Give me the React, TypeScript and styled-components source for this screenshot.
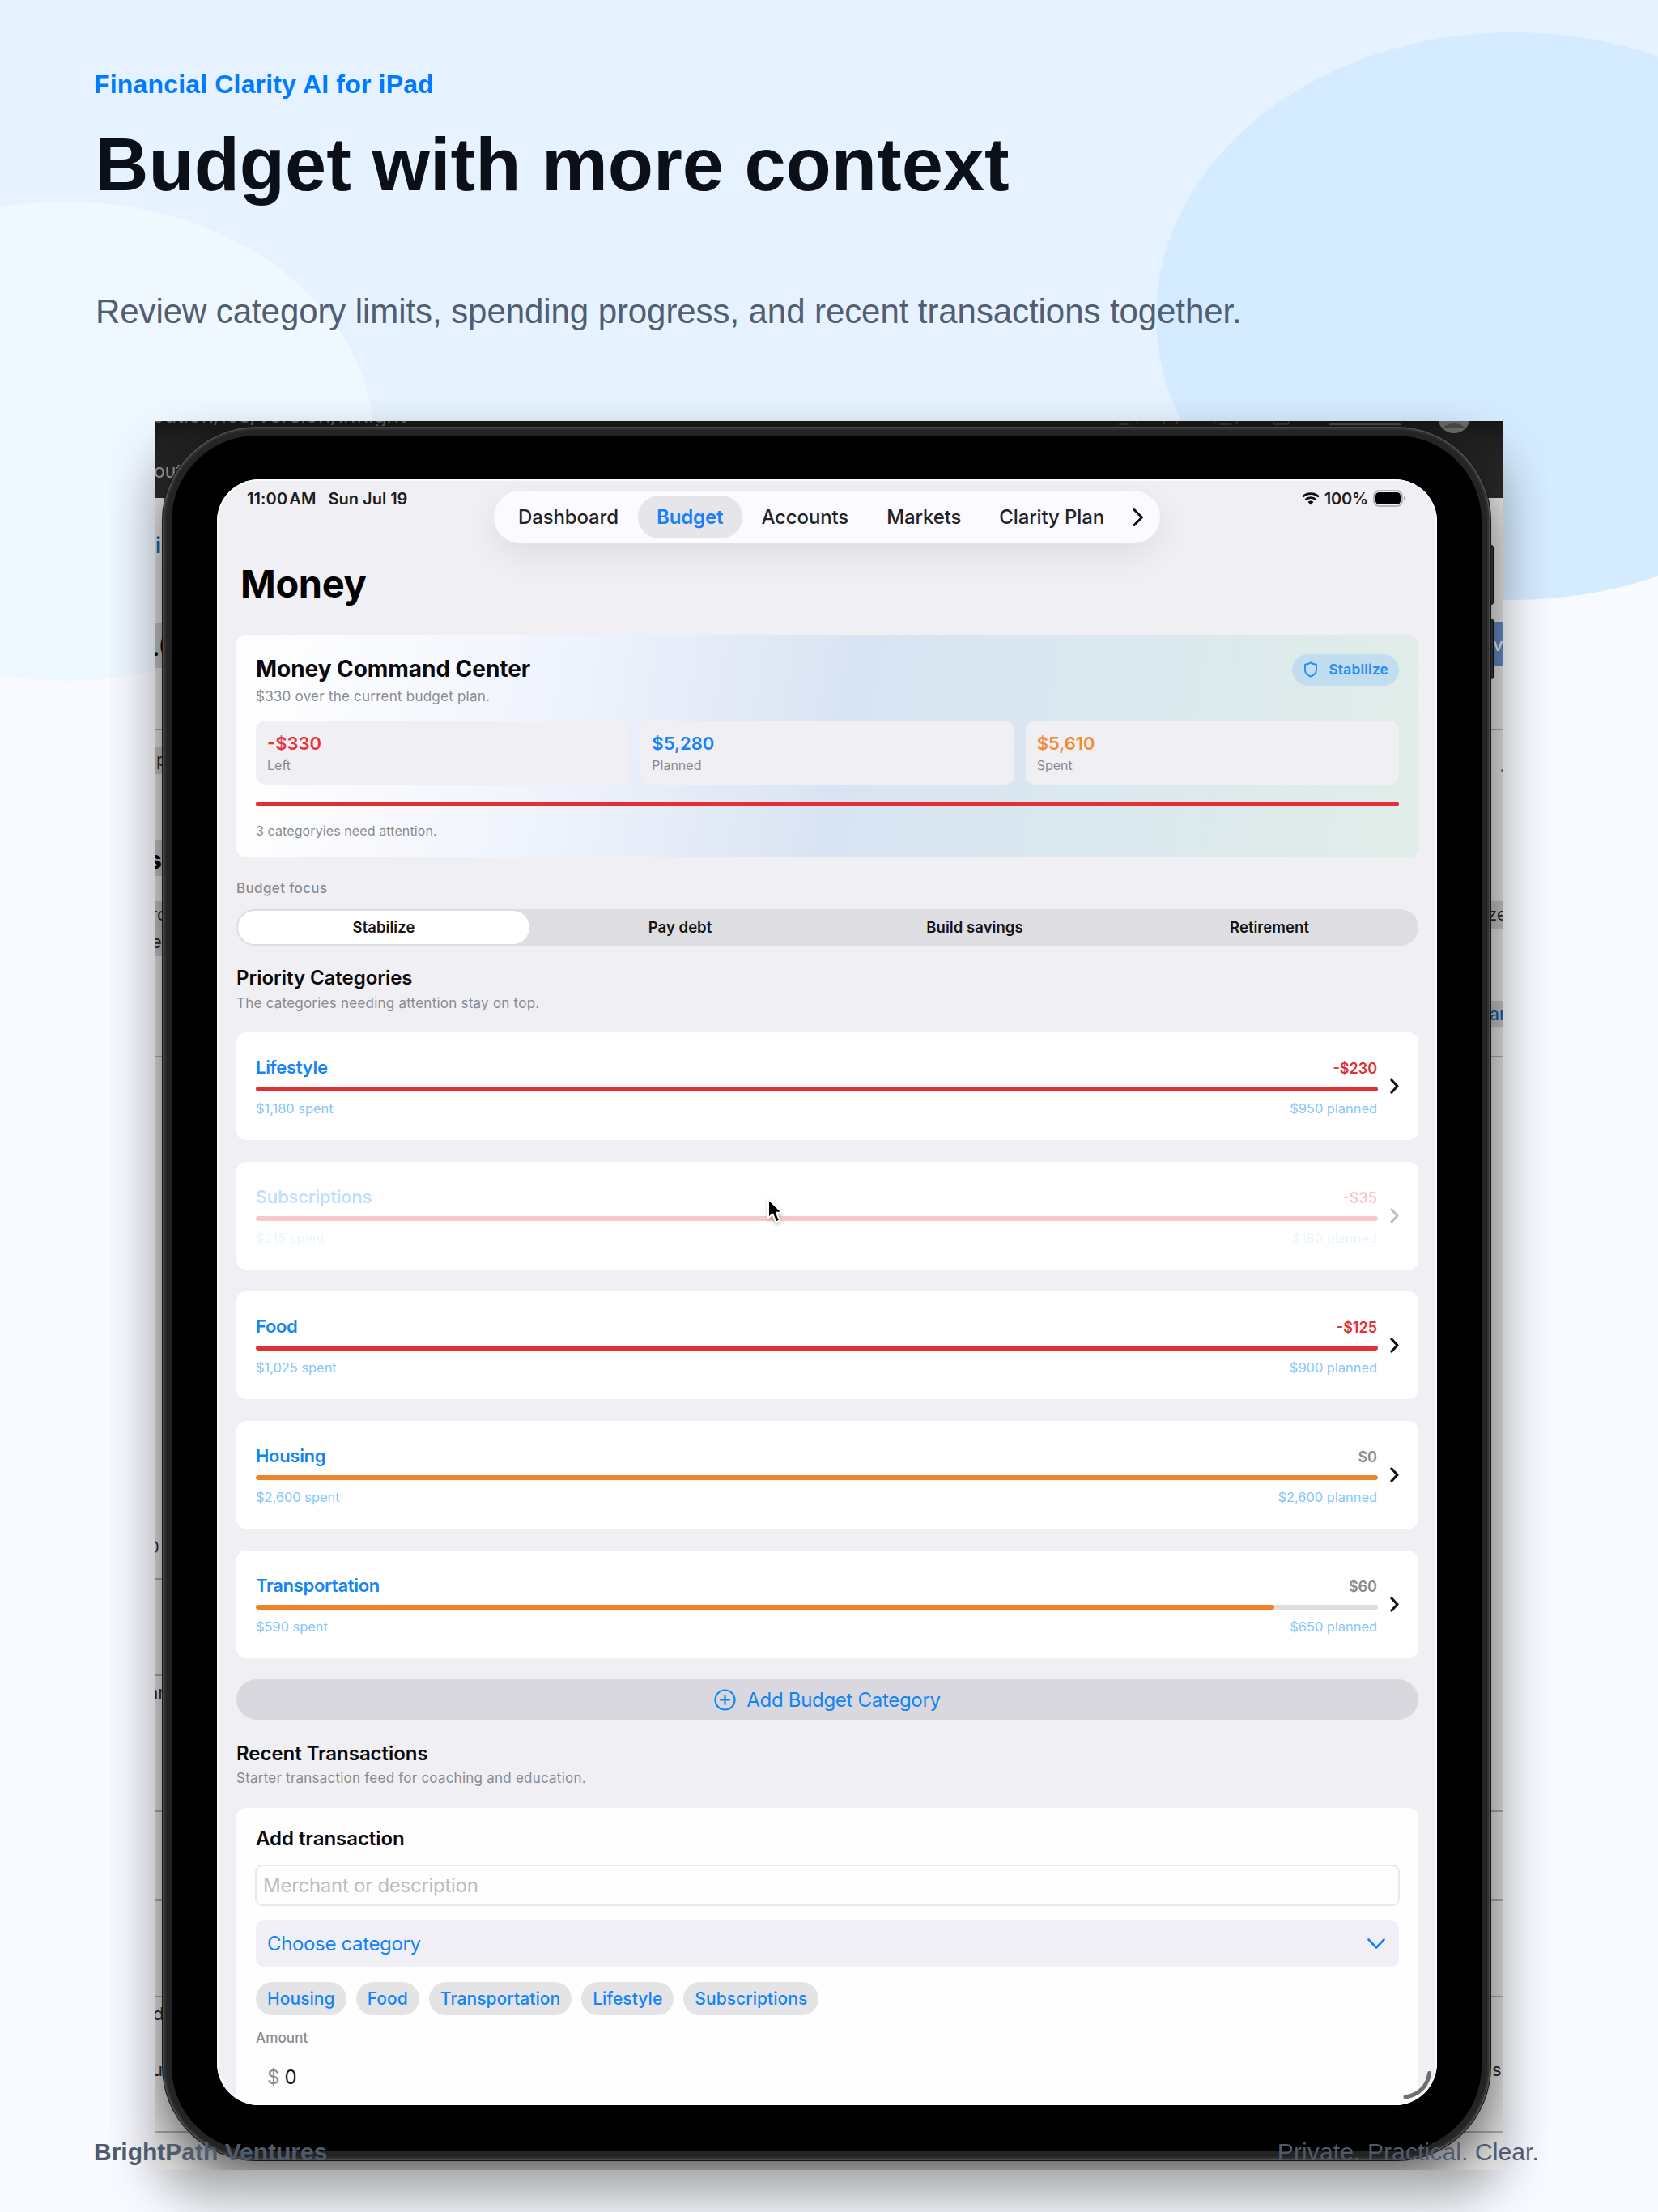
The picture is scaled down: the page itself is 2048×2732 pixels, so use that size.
import * as React from 'react';
import styled, { createGlobalStyle } from 'styled-components';

const BLUE = '#1484f4';
const RED = '#e22f34';
const ORANGE = '#ee8427';
const GREY = '#8a8a8f';

interface Category {
    name: string;
    left: string;
    spent: string;
    planned: string;
    progress: number;
    barColor: string;
    leftColor: string;
    faded?: boolean;
}

interface Fragment {
    x: number;
    y: number;
    text: string;
    size?: number;
    color?: string;
    weight?: number;
}

interface Band {
    y: number;
    height: number;
    color: string;
    right?: boolean;
}

const tabs = ['Dashboard', 'Budget', 'Accounts', 'Markets', 'Clarity Plan'];

const focusOptions = ['Stabilize', 'Pay debt', 'Build savings', 'Retirement'];

const tiles = [
    { value: '-$330', label: 'Left', color: '#e5353c' },
    { value: '$5,280', label: 'Planned', color: BLUE },
    { value: '$5,610', label: 'Spent', color: '#f08c38' },
];

const categories: Category[] = [
    { name: 'Lifestyle', left: '-$230', spent: '$1,180 spent', planned: '$950 planned', progress: 100, barColor: RED, leftColor: RED },
    { name: 'Subscriptions', left: '-$35', spent: '$215 spent', planned: '$180 planned', progress: 100, barColor: RED, leftColor: RED, faded: true },
    { name: 'Food', left: '-$125', spent: '$1,025 spent', planned: '$900 planned', progress: 100, barColor: RED, leftColor: RED },
    { name: 'Housing', left: '$0', spent: '$2,600 spent', planned: '$2,600 planned', progress: 100, barColor: ORANGE, leftColor: GREY },
    { name: 'Transportation', left: '$60', spent: '$590 spent', planned: '$650 planned', progress: 90.8, barColor: ORANGE, leftColor: GREY },
];

const chips = ['Housing', 'Food', 'Transportation', 'Lifestyle', 'Subscriptions'];

// pieces of the browser page that stick out behind the tablet
const bands: Band[] = [
    { y: 23, height: 1, color: '#3a3a3a' },
    { y: 249, height: 56, color: '#c4c4c4' },
    { y: 380, height: 2, color: '#aaaaaa' },
    { y: 402, height: 34, color: '#c4c4c4' },
    { y: 518, height: 44, color: '#c4c4c4' },
    { y: 593, height: 68, color: '#c4c4c4' },
    { y: 784, height: 2, color: '#aaaaaa' },
    { y: 1429, height: 2, color: '#aaaaaa' },
    { y: 1548, height: 2, color: '#aaaaaa' },
    { y: 1716, height: 2, color: '#aaaaaa' },
    { y: 1826, height: 2, color: '#aaaaaa' },
    { y: 1945, height: 2, color: '#aaaaaa' },
    { y: 2112, height: 2, color: '#aaaaaa' },
    { y: 248, height: 54, color: '#6488c0', right: true },
    { y: 380, height: 2, color: '#aaaaaa', right: true },
    { y: 593, height: 34, color: '#c4c4c4', right: true },
    { y: 716, height: 33, color: '#c4c4c4', right: true },
    { y: 784, height: 2, color: '#aaaaaa', right: true },
    { y: 1716, height: 2, color: '#aaaaaa', right: true },
    { y: 1826, height: 2, color: '#aaaaaa', right: true },
    { y: 1945, height: 2, color: '#aaaaaa', right: true },
    { y: 2112, height: 2, color: '#aaaaaa', right: true },
];

const fragments: Fragment[] = [
    { x: -4, y: -7, text: 'bution/ios/version/inflight', size: 26, color: '#5e5e5e' },
    { x: -1, y: 62, text: 'out', size: 23, color: '#9a9a9a' },
    { x: 1, y: 154, text: 'ig', size: 27, color: '#1660ae', weight: 600 },
    { x: -3, y: 280, text: '.', size: 28, color: '#000', weight: 700 },
    { x: 5, y: 276, text: '(', size: 30, color: '#000', weight: 700 },
    { x: 2, y: 418, text: 'p', size: 22 },
    { x: -9, y: 542, text: 's', size: 31, color: '#000', weight: 800 },
    { x: -5, y: 609, text: 'ro', size: 22 },
    { x: -4, y: 643, text: 'e', size: 22 },
    { x: -7, y: 1391, text: '0', size: 20 },
    { x: -8, y: 1570, text: 'ar', size: 22 },
    { x: -2, y: 1967, text: 'd', size: 22 },
    { x: -3, y: 2036, text: 'ur', size: 22 },
    { x: 1653, y: 276, text: 'v', size: 22, color: '#e8eef8', weight: 500 },
    { x: 1661, y: 431, text: '⌄', size: 18, color: '#1660ae', weight: 700 },
    { x: 1646, y: 609, text: 'ze', size: 22 },
    { x: 1649, y: 733, text: 'ar', size: 21, color: '#1660ae', weight: 500 },
    { x: 1652, y: 2036, text: 's', size: 22 },
];

const GlobalStyle = createGlobalStyle`
    * {
        box-sizing: border-box;
    }
    body {
        margin: 0;
        background: #f8faff;
        font-family: Inter, sans-serif;
    }
`;

const Page = styled.main`
    position: relative;
    width: 2048px;
    height: 2732px;
    overflow: hidden;
    background: linear-gradient(#e6f2ff 0, #e6f2ff 640px, #f8faff 640px);
`;

const Blob = styled.div<{ $left: number; $top: number; $width: number; $height: number; $color: string }>`
    position: absolute;
    left: ${props => props.$left}px;
    top: ${props => props.$top}px;
    width: ${props => props.$width}px;
    height: ${props => props.$height}px;
    border-radius: 50%;
    background: ${props => props.$color};
`;

const Header = styled.header`
    position: relative;
    height: 520px;
    padding: 86px 116px 0;
    font-family: 'Liberation Sans', Arial, sans-serif;
    white-space: nowrap;
`;

const Eyebrow = styled.div`
    color: #007aff;
    font-size: 32px;
    font-weight: 700;
    letter-spacing: 0.17px;
    line-height: 36px;
`;

const Title = styled.h1`
    margin: 28px 0 0;
    padding-left: 1px;
    color: #0b1018;
    font-size: 92px;
    font-weight: 700;
    line-height: 106px;
`;

const Lead = styled.p`
    margin: 105px 0 0;
    padding-left: 2px;
    color: #515d70;
    font-size: 42px;
    letter-spacing: -0.08px;
    line-height: 48px;
`;

const Stage = styled.section`
    position: relative;
    width: 1665px;
    height: 2160px;
    margin-left: 191px;
    clip-path: inset(-26px -55px -60px -55px);
`;

const StageShadow = styled.div`
    position: absolute;
    inset: 0;
    border-radius: 64px;
    box-shadow: 0 30px 62px rgba(0, 0, 0, 0.36);
`;

const Backdrop = styled.div`
    position: absolute;
    inset: 0;
    overflow: hidden;
    background: linear-gradient(#171717 0, #202020 24px, #2a2a2a 95px, #e4e4e4 95px);
`;

const BackdropBand = styled.div<{ $y: number; $height: number; $color: string; $right?: boolean }>`
    position: absolute;
    top: ${props => props.$y}px;
    ${props => (props.$right ? 'right' : 'left')}: 0;
    width: 60px;
    height: ${props => props.$height}px;
    background: ${props => props.$color};
`;

const BackdropText = styled.span<{ $x: number; $y: number; $size: number; $color: string; $weight: number }>`
    position: absolute;
    left: ${props => props.$x}px;
    top: ${props => props.$y}px;
    color: ${props => props.$color};
    font-size: ${props => props.$size}px;
    font-weight: ${props => props.$weight};
    line-height: 0;
    white-space: nowrap;
`;

const BackdropIcons = styled.svg`
    position: absolute;
    right: 0;
    top: 0;
`;

const Tablet = styled.div`
    position: absolute;
    left: 10px;
    top: 7px;
    width: 1640px;
    height: 2141px;
    padding: 63px 64px 66px 65px;
    border: 2px solid #4c4c4c;
    border-radius: 116px;
    background: #000;
    box-shadow:
        inset 0 0 0 2px #303030,
        inset 0 0 0 9px #242424,
        0 0 0 1px #151515,
        0 26px 60px rgba(0, 0, 0, 0.58);
`;

const SideButton = styled.div<{ $y: number; $height: number }>`
    position: absolute;
    left: 1649px;
    top: ${props => props.$y}px;
    width: 5px;
    height: ${props => props.$height}px;
    border: 1px solid #111;
    border-radius: 0 3px 3px 0;
    background: #3c3c3c;
`;

const TopButton = styled.div`
    position: absolute;
    left: 1450px;
    top: 3px;
    width: 90px;
    height: 5px;
    border-top: 2px solid #4a4a4a;
    border-radius: 3px 3px 0 0;
    background: #222;
`;

const Screen = styled.div`
    display: flex;
    flex-direction: column;
    position: relative;
    width: 100%;
    height: 100%;
    padding: 0 23px 0 24px;
    overflow: hidden;
    border-radius: 52px;
    background: #efeff4;
    box-shadow: inset 0 0 0 2px #fafafc;
    white-space: nowrap;
`;

const TopBar = styled.div`
    display: grid;
    grid-template-columns: 1fr auto 1fr;
    align-items: start;
    height: 100px;
    flex: none;
`;

const Status = styled.div<{ $end?: boolean }>`
    display: flex;
    align-items: center;
    justify-content: ${props => (props.$end ? 'flex-end' : 'flex-start')};
    gap: ${props => (props.$end ? 6 : 15)}px;
    height: 47px;
    padding: ${props => (props.$end ? '0 15px 0 0' : '0 0 0 13px')};
    color: #1c1c1e;
    font-size: 20px;
    font-weight: 600;
`;

const Clock = styled.span`
    letter-spacing: 0.1px;
    word-spacing: -3px;
`;

const Charge = styled.span`
    letter-spacing: -0.2px;
`;

const TabBar = styled.nav`
    display: flex;
    align-items: center;
    width: 823px;
    height: 65px;
    margin: 14px 2px 0 0;
    padding: 0 20px 0 7px;
    border-radius: 33px;
    background: #fafaff;
    box-shadow: 0 14px 44px rgba(0, 0, 0, 0.08);
`;

const Tab = styled.span<{ $active?: boolean }>`
    height: 53px;
    padding: 0 23.5px;
    border-radius: 27px;
    background: ${props => (props.$active ? '#e6e5ea' : 'transparent')};
    color: ${props => (props.$active ? '#1a80f5' : '#222226')};
    font-size: 24px;
    font-weight: ${props => (props.$active ? 600 : 500)};
    letter-spacing: -0.13px;
    line-height: 53px;
`;

const TabMore = styled.svg`
    margin-left: auto;
`;

const ScreenTitle = styled.h2`
    flex: none;
    height: 56px;
    margin: 0 0 36px;
    padding-left: 5px;
    color: #000;
    font-size: 47px;
    font-weight: 700;
    letter-spacing: -0.4px;
    line-height: 58px;
`;

const Hero = styled.section`
    flex: none;
    height: 275px;
    padding: 23px 24px 0;
    border-radius: 12px;
    background: linear-gradient(100deg, #fefefe 3%, #f0f4fd 26%, #dfe7f5 46%, #d8e4f3 51%, #dbe9ef 76%, #e0ecea 92%, #e0ede8 100%);
`;

const HeroTop = styled.div`
    display: flex;
    align-items: center;
    justify-content: space-between;
    height: 40px;
`;

const HeroTitle = styled.h3`
    margin: -2px 0 0;
    color: #0a0a0c;
    font-size: 28px;
    font-weight: 700;
    letter-spacing: -0.05px;
    line-height: 36px;
`;

const Badge = styled.span`
    display: flex;
    align-items: center;
    justify-content: space-between;
    width: 132px;
    height: 39px;
    padding: 0 13px 0 14px;
    border-radius: 20px;
    background: #c1def1;
    color: #2c8ff0;
    font-size: 17px;
    font-weight: 700;
    letter-spacing: 0.25px;
`;

const Caption = styled.p<{ $top?: number; $small?: boolean }>`
    flex: none;
    margin: ${props => props.$top || 0}px 0 0;
    color: ${GREY};
    font-size: ${props => (props.$small ? 16 : 17)}px;
    letter-spacing: ${props => (props.$small ? 0.1 : 0.23)}px;
    line-height: 26px;
`;

const Tiles = styled.div`
    display: grid;
    grid-template-columns: repeat(3, 1fr);
    gap: 14px;
    margin-top: 17px;
`;

const Tile = styled.div`
    height: 79px;
    padding: 13px 14px 0;
    border-radius: 12px;
    background: #efeff4;
`;

const TileValue = styled.div<{ $color: string }>`
    color: ${props => props.$color};
    font-size: 22px;
    font-weight: 600;
    line-height: 30px;
`;

const TileLabel = styled.div`
    color: ${GREY};
    font-size: 16px;
    line-height: 25px;
`;

const Track = styled.div<{ $top: number }>`
    height: 6px;
    margin-top: ${props => props.$top}px;
    overflow: hidden;
    border-radius: 3px;
    background: #dedee2;
`;

const Fill = styled.div<{ $color: string }>`
    height: 100%;
    border-radius: 3px;
    background: ${props => props.$color};
`;

const FieldLabel = styled.div<{ $top: number; $wide?: boolean }>`
    flex: none;
    margin-top: ${props => props.$top}px;
    color: ${GREY};
    font-size: 17px;
    font-weight: 500;
    letter-spacing: ${props => (props.$wide ? 0.35 : 0.15)}px;
    line-height: 26px;
`;

const Segments = styled.div`
    display: grid;
    grid-template-columns: repeat(4, 1fr);
    flex: none;
    height: 45px;
    margin-top: 13px;
    padding: 2px;
    border-radius: 23px;
    background: #dddde2;
`;

const Segment = styled.span<{ $active?: boolean }>`
    margin-right: ${props => (props.$active ? 4 : 0)}px;
    border-radius: 21px;
    background: ${props => (props.$active ? '#fff' : 'transparent')};
    color: #141416;
    font-size: 18.5px;
    font-weight: 600;
    letter-spacing: 0.05px;
    line-height: 41px;
    text-align: center;
`;

const SectionTitle = styled.h3<{ $top: number }>`
    flex: none;
    margin: ${props => props.$top}px 0 0;
    color: #0a0a0c;
    font-size: 24px;
    font-weight: 600;
    letter-spacing: -0.04px;
    line-height: 32px;
`;

const CategoryList = styled.div`
    display: flex;
    flex-direction: column;
    flex: none;
    gap: 27px;
    margin-top: 23px;
`;

const CategoryCard = styled.div`
    height: 133px;
    border-radius: 12px;
    background: #fff;
`;

const CategoryBody = styled.div<{ $faded?: boolean }>`
    display: flex;
    align-items: center;
    gap: 15px;
    height: 100%;
    padding: 0 24px;
    opacity: ${props => (props.$faded ? 0.26 : 1)};
`;

const CategoryInfo = styled.div`
    flex: 1;
    margin-bottom: 2px;
`;

const Line = styled.div`
    display: flex;
    align-items: center;
    justify-content: space-between;
    height: 28px;
`;

const CategoryName = styled.span`
    margin-bottom: 3px;
    color: ${BLUE};
    font-size: 22px;
    font-weight: 600;
    letter-spacing: -0.3px;
`;

const CategoryLeft = styled.span<{ $color: string }>`
    margin-right: 1px;
    color: ${props => props.$color};
    font-size: 18px;
    font-weight: 600;
`;

const CategoryNote = styled.span<{ $faded?: boolean }>`
    margin: 14px 1px 0 0;
    opacity: ${props => (props.$faded ? 0.65 : 1)};
    color: #85c6fa;
    font-size: 16.4px;
`;

const AddButton = styled.div`
    display: flex;
    align-items: center;
    justify-content: center;
    flex: none;
    gap: 13px;
    height: 50px;
    margin-top: 26px;
    border-radius: 25px;
    background: #d9d8de;
    color: ${BLUE};
    font-size: 24px;
    letter-spacing: -0.3px;
`;

const FormCard = styled.section`
    flex: none;
    height: 420px;
    margin-top: 24px;
    padding: 22px 24px 0;
    border-radius: 12px;
    background: #fefefe;
`;

const Input = styled.div`
    height: 51px;
    margin: 16px -1px 0;
    padding-left: 8px;
    border: 2px solid #e9e9eb;
    border-radius: 9px;
    color: #bcbcbf;
    font-size: 24px;
    letter-spacing: -0.27px;
    line-height: 48px;
`;

const Select = styled.div`
    display: flex;
    align-items: center;
    justify-content: space-between;
    height: 59px;
    margin-top: 17px;
    padding: 0 17px 0 14px;
    border-radius: 12px;
    background: #efeff5;
    color: ${BLUE};
    font-size: 24px;
    letter-spacing: -0.35px;
`;

const Chips = styled.div`
    display: flex;
    gap: 12px;
    margin-top: 18px;
`;

const Chip = styled.span`
    height: 41px;
    padding: 0 14px;
    border-radius: 21px;
    background: #e4e4e7;
    color: ${BLUE};
    font-size: 21px;
    font-weight: 500;
    letter-spacing: 0.06px;
    line-height: 41px;
`;

const Amount = styled.div`
    display: flex;
    gap: 6px;
    margin-top: 16px;
    padding-left: 14px;
    color: #141416;
    font-size: 24px;
    line-height: 40px;
`;

const Currency = styled.span`
    color: ${GREY};
`;

const CornerArc = styled.svg`
    position: absolute;
    right: 5px;
    bottom: 5px;
`;

const Cursor = styled.svg`
    position: absolute;
    left: 678px;
    top: 887px;
    filter: drop-shadow(0 2px 2px rgba(0, 0, 0, 0.3));
`;

const Footer = styled.footer`
    display: flex;
    position: absolute;
    left: 116px;
    right: 147px;
    top: 2640px;
    justify-content: space-between;
    color: #4f5b6c;
    font-family: 'Liberation Sans', Arial, sans-serif;
    font-size: 30px;
    line-height: 36px;
`;

const Publisher = styled.strong`
    font-weight: 700;
`;

const Motto = styled.span`
    letter-spacing: 0.12px;
`;

const ChevronRight = () => (
    <svg width="11" height="19" viewBox="0 0 11 19" fill="none" stroke="#111" strokeWidth="3.2" strokeLinecap="round" strokeLinejoin="round">
        <path d="M2 2l7 7.5-7 7.5" />
    </svg>
);

const ShieldIcon = () => (
    <svg width="18" height="20" viewBox="0 0 18 20" fill="none" stroke="#2c8ff0" strokeWidth="2" strokeLinejoin="round">
        <path d="M9 1.4c2.2 1.600 4.400 2.200 7 2.400v7c0 3.600-3.200 6.200-7 7.800-3.800-1.600-7-4.200-7-7.800v-7c2.600-.2 4.800-.8 7-2.400z" />
    </svg>
);

const WifiIcon = () => (
    <svg width="22" height="16" viewBox="0 0 22 16" fill="none" stroke="#111" strokeWidth="2.8">
        <path d="M1 5.600c5.600-5.400 14.400-5.400 20 0" />
        <path d="M4.600 9.300c3.600-3.500 9.200-3.500 12.800 0" />
        <path d="M11 15.400l-3.400-3.500c1.900-1.800 4.900-1.800 6.800 0z" fill="#111" stroke="none" />
    </svg>
);

const BatteryIcon = () => (
    <svg width="41" height="21" viewBox="0 0 41 21">
        <rect x="1" y="1" width="35" height="19" rx="6.5" fill="none" stroke="#b4b3b9" strokeWidth="2" />
        <rect x="3" y="3" width="31" height="15" rx="4.5" fill="#000" />
        <path d="M38 8c2 .6 2 4.400 0 5z" fill="#a5a4aa" />
    </svg>
);

const CategoryRow = ({ data }: { data: Category }) => (
    <CategoryCard>
        <CategoryBody $faded={data.faded}>
            <CategoryInfo>
                <Line>
                    <CategoryName>{data.name}</CategoryName>
                    <CategoryLeft $color={data.leftColor}>{data.left}</CategoryLeft>
                </Line>
                <Track $top={9}>
                    <Fill $color={data.barColor} style={{ width: `${data.progress}%` }} />
                </Track>
                <Line>
                    <CategoryNote $faded={data.faded}>{data.spent}</CategoryNote>
                    <CategoryNote $faded={data.faded}>{data.planned}</CategoryNote>
                </Line>
            </CategoryInfo>
            <ChevronRight />
        </CategoryBody>
    </CategoryCard>
);

const PageBehind = () => (
    <>
        {bands.map((band, index) => (
            <BackdropBand key={index} $y={band.y} $height={band.height} $color={band.color} $right={band.right} />
        ))}
        {fragments.map((item, index) => (
            <BackdropText
                key={index}
                $x={item.x}
                $y={item.y}
                $size={item.size || 22}
                $color={item.color || '#2a2a2a'}
                $weight={item.weight || 400}
            >
                {item.text}
            </BackdropText>
        ))}
        <BackdropIcons width="480" height="20" viewBox="-40 0 480 20" fill="none" stroke="#3c3c3c" strokeWidth="1.5">
            <path d="M-34 4h12M-11 0v4M22 4v-4M38 4v-4M84 4v-4M90 4h14M112 4v-4M157 0v2q0 2 2 2h15q2 0 2-2v-2" />
            <circle cx="380" cy="-5" r="20" fill="#686866" stroke="none" />
            <path d="M366 9c6-8 22-8 28 0" fill="#484846" stroke="none" />
        </BackdropIcons>
    </>
);

class App extends React.Component {
    public render() {
        return (
            <Page>
                <GlobalStyle />
                <Blob $left={1428} $top={40} $width={884} $height={701} $color={'#d5ebff'} />
                <Blob $left={-298} $top={249} $width={760} $height={592} $color={'#eff7ff'} />
                <Header>
                    <Eyebrow>Financial Clarity AI for iPad</Eyebrow>
                    <Title>Budget with more context</Title>
                    <Lead>Review category limits, spending progress, and recent transactions together.</Lead>
                </Header>
                <Stage>
                    <StageShadow />
                    <Backdrop>
                        <PageBehind />
                        <SideButton $y={153} $height={74} />
                        <SideButton $y={244} $height={75} />
                        <TopButton />
                        <Tablet>
                            <Screen>
                                <TopBar>
                                    <Status>
                                        <Clock>11:00 AM</Clock>
                                        <span>Sun Jul 19</span>
                                    </Status>
                                    <TabBar>
                                        {tabs.map(tab => (
                                            <Tab key={tab} $active={tab === 'Budget'}>{tab}</Tab>
                                        ))}
                                        <TabMore width="14" height="24" viewBox="0 0 14 24" fill="none" stroke="#111" strokeWidth="3" strokeLinecap="round" strokeLinejoin="round">
                                            <path d="M2 2.500l9.500 9.500-9.500 9.500" />
                                        </TabMore>
                                    </TabBar>
                                    <Status $end>
                                        <WifiIcon />
                                        <Charge>100%</Charge>
                                        <BatteryIcon />
                                    </Status>
                                </TopBar>
                                <ScreenTitle>Money</ScreenTitle>
                                <Hero>
                                    <HeroTop>
                                        <HeroTitle>Money Command Center</HeroTitle>
                                        <Badge>
                                            <ShieldIcon />
                                            <span>Stabilize</span>
                                        </Badge>
                                    </HeroTop>
                                    <Caption>$330 over the current budget plan.</Caption>
                                    <Tiles>
                                        {tiles.map(tile => (
                                            <Tile key={tile.label}>
                                                <TileValue $color={tile.color}>{tile.value}</TileValue>
                                                <TileLabel>{tile.label}</TileLabel>
                                            </Tile>
                                        ))}
                                    </Tiles>
                                    <Track $top={21}>
                                        <Fill $color={RED} />
                                    </Track>
                                    <Caption $top={17} $small>3 categoryies need attention.</Caption>
                                </Hero>
                                <FieldLabel $top={25} $wide>Budget focus</FieldLabel>
                                <Segments>
                                    {focusOptions.map((option, index) => (
                                        <Segment key={option} $active={index === 0}>{option}</Segment>
                                    ))}
                                </Segments>
                                <SectionTitle $top={24}>Priority Categories</SectionTitle>
                                <Caption $top={2}>The categories needing attention stay on top.</Caption>
                                <CategoryList>
                                    {categories.map(category => (
                                        <CategoryRow key={category.name} data={category} />
                                    ))}
                                </CategoryList>
                                <AddButton>
                                    <svg width="27" height="27" viewBox="0 0 27 27" fill="none" stroke={BLUE} strokeWidth="2.2" strokeLinecap="round">
                                        <circle cx="13.5" cy="13.5" r="12" />
                                        <path d="M13.500 8v11M8 13.500h11" />
                                    </svg>
                                    <span>Add Budget Category</span>
                                </AddButton>
                                <SectionTitle $top={26}>Recent Transactions</SectionTitle>
                                <Caption $top={1}>Starter transaction feed for coaching and education.</Caption>
                                <FormCard>
                                    <SectionTitle $top={0}>Add transaction</SectionTitle>
                                    <Input>Merchant or description</Input>
                                    <Select>
                                        <span>Choose category</span>
                                        <svg width="22" height="14" viewBox="0 0 22 14" fill="none" stroke={BLUE} strokeWidth="2.6" strokeLinecap="round" strokeLinejoin="round">
                                            <path d="M1.500 1.500l9.500 10 9.500-10" />
                                        </svg>
                                    </Select>
                                    <Chips>
                                        {chips.map(chip => (
                                            <Chip key={chip}>{chip}</Chip>
                                        ))}
                                    </Chips>
                                    <FieldLabel $top={15}>Amount</FieldLabel>
                                    <Amount>
                                        <Currency>$</Currency>
                                        <span>0</span>
                                    </Amount>
                                </FormCard>
                                <CornerArc width="38" height="38" viewBox="0 0 38 38" fill="none" stroke="#6e6e70" strokeWidth="5" strokeLinecap="round">
                                    <path d="M33.500 3.500c-2 16-13 27-29.500 29.500" />
                                </CornerArc>
                                <Cursor width="24" height="34" viewBox="0 0 24 34">
                                    <path d="M3 2v23.500l5.300-5 4.200 9.800 4.600-2-4.200-9.500h7.400z" fill="#000" stroke="#fff" strokeWidth="2" strokeLinejoin="round" />
                                </Cursor>
                            </Screen>
                        </Tablet>
                    </Backdrop>
                </Stage>
                <Footer>
                    <Publisher>BrightPath Ventures</Publisher>
                    <Motto>Private. Practical. Clear.</Motto>
                </Footer>
            </Page>
        );
    }
}

export default App;
